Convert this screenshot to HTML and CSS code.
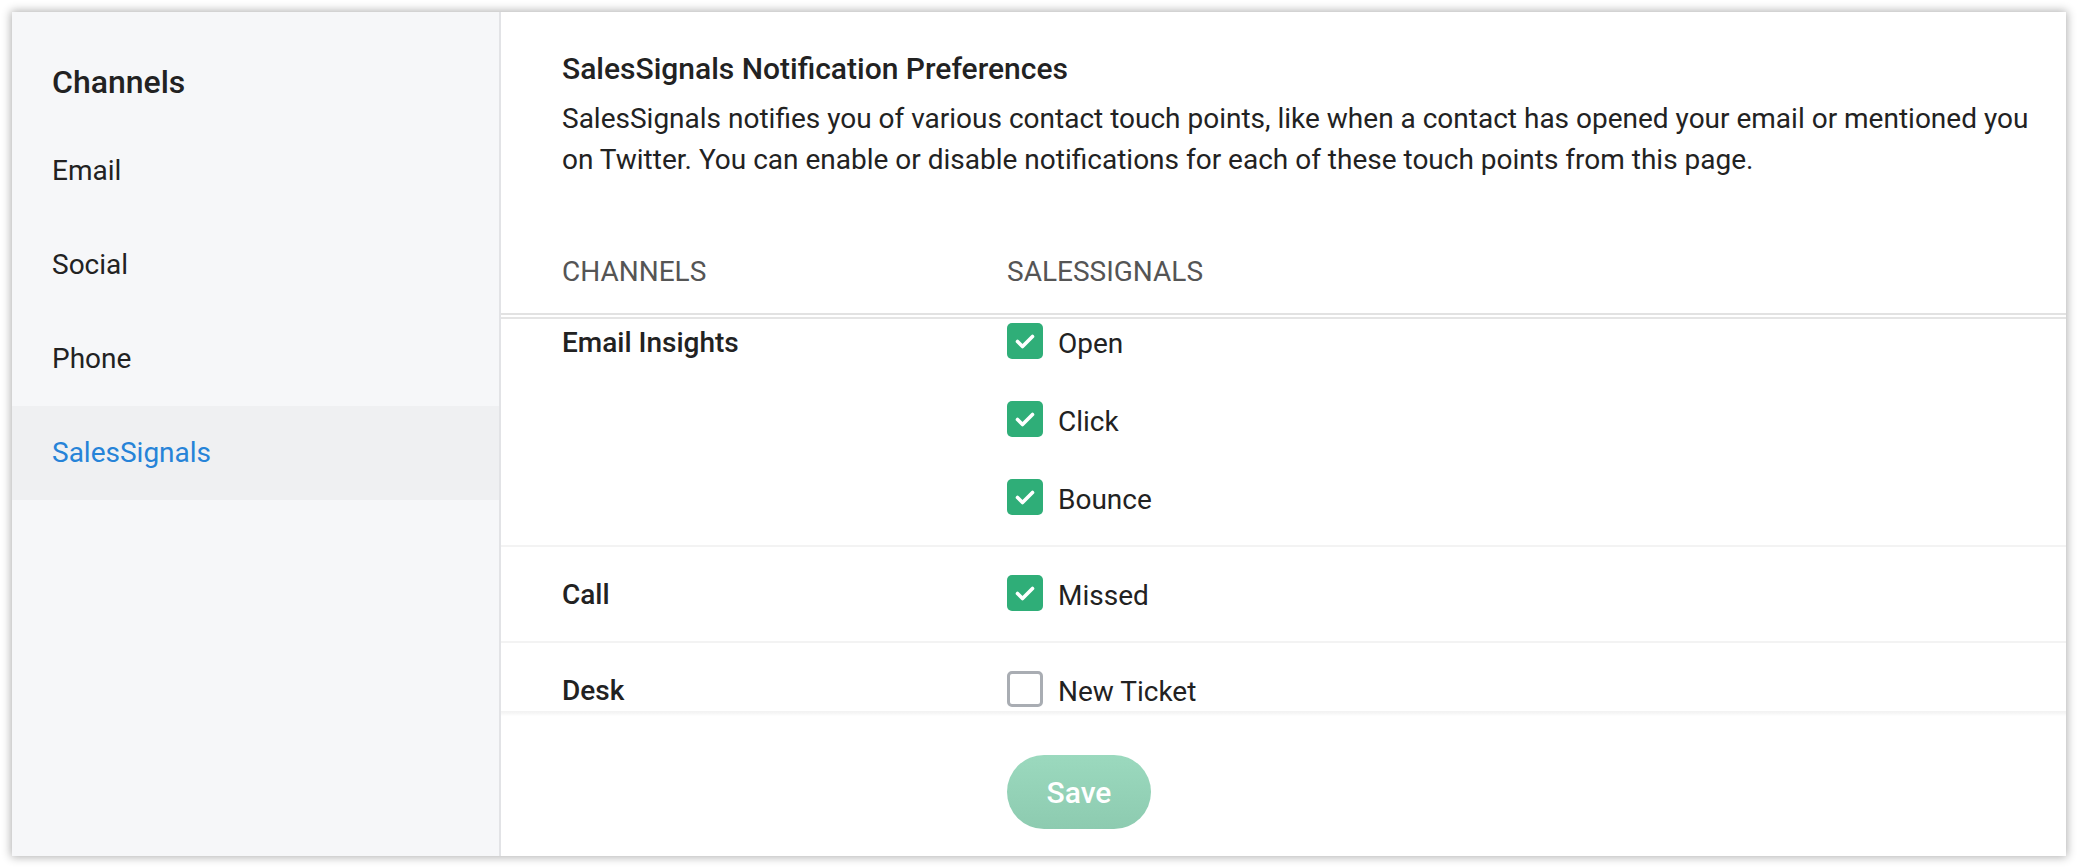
FILE: index.html
```html
<!DOCTYPE html>
<html lang="en">
<head>
<meta charset="utf-8">
<title>SalesSignals Notification Preferences</title>
<link rel="stylesheet" href="styles.css">
</head>
<body>
<div class="card">
  <aside class="sidebar">
    <h2 class="side-title">Channels</h2>
    <nav class="side-nav">
      <div class="side-item">Email</div>
      <div class="side-item">Social</div>
      <div class="side-item">Phone</div>
      <div class="side-item active">SalesSignals</div>
    </nav>
  </aside>
  <main class="panel">
    <header class="intro">
      <h1 class="title">SalesSignals Notification Preferences</h1>
      <p class="desc">SalesSignals notifies you of various contact touch points, like when a contact has opened your email or mentioned you on Twitter. You can enable or disable notifications for each of these touch points from this page.</p>
    </header>
    <div class="grid-row head-row">
      <div class="head-cell">CHANNELS</div>
      <div class="head-cell">SALESSIGNALS</div>
    </div>
    <div class="scroll">
      <div class="rows">
        <div class="grid-row body-row">
          <div class="row-label">Email Insights</div>
          <div class="options">
            <label class="opt"><span class="box checked"><svg viewBox="0 0 36 36"><polyline points="10.5,18.5 15.5,23.5 25.5,13.5"/></svg></span><span class="opt-text">Open</span></label>
            <label class="opt"><span class="box checked"><svg viewBox="0 0 36 36"><polyline points="10.5,18.5 15.5,23.5 25.5,13.5"/></svg></span><span class="opt-text">Click</span></label>
            <label class="opt"><span class="box checked"><svg viewBox="0 0 36 36"><polyline points="10.5,18.5 15.5,23.5 25.5,13.5"/></svg></span><span class="opt-text">Bounce</span></label>
          </div>
        </div>
        <div class="grid-row body-row">
          <div class="row-label">Call</div>
          <div class="options">
            <label class="opt"><span class="box checked"><svg viewBox="0 0 36 36"><polyline points="10.5,18.5 15.5,23.5 25.5,13.5"/></svg></span><span class="opt-text">Missed</span></label>
          </div>
        </div>
        <div class="grid-row body-row">
          <div class="row-label">Desk</div>
          <div class="options">
            <label class="opt"><span class="box"></span><span class="opt-text">New Ticket</span></label>
          </div>
        </div>
      </div>
    </div>
    <footer class="grid-row footer">
      <div></div>
      <div><button class="save" type="button">Save</button></div>
    </footer>
  </main>
</div>
</body>
</html>
```
FILE: styles.css
```css
* { box-sizing: border-box; }
html, body { margin: 0; padding: 0; background: #ffffff; }
body {
  font-family: Roboto, "Noto Sans", "Liberation Sans", sans-serif;
  color: #222222;
  padding: 12px;
  height: 868px;
  overflow: hidden;
}
.card {
  display: flex;
  height: 844px;
  background: #ffffff;
  box-shadow: 0 0 9px 1px rgba(0, 0, 0, 0.32);
  overflow: hidden;
}
.sidebar {
  width: 489px;
  flex: none;
  background: #f6f7f9;
  border-right: 2px solid #e2e3e6;
}
.side-title {
  margin: 0 0 22px 0;
  padding: 50px 0 0 40px;
  font-size: 32px;
  line-height: 40px;
  font-weight: 500;
  color: #222222;
}
.side-item {
  height: 94px;
  line-height: 94px;
  padding-left: 40px;
  font-size: 28px;
  color: #222222;
}
.side-item.active {
  background: #eff0f2;
  color: #2683d8;
}
.panel {
  flex: 1;
  display: flex;
  flex-direction: column;
  min-width: 0;
}
.intro {
  padding: 39px 30px 0 61px;
}
.title {
  margin: 0;
  font-size: 30px;
  line-height: 36px;
  font-weight: 500;
  color: #222222;
}
.desc {
  margin: 11px 0 0 0;
  font-size: 28px;
  line-height: 41px;
  color: #222222;
}
.grid-row {
  display: grid;
  grid-template-columns: 445px 1fr;
  padding-left: 61px;
}
.head-row {
  padding-top: 74px;
  padding-bottom: 23px;
  border-bottom: 2px solid #e2e2e2;
}
.head-cell {
  font-size: 28px;
  line-height: 36px;
  color: #555555;
}
.scroll {
  margin-top: 2px;
  border-top: 2px solid #e4e4e4;
  height: 394px;
  overflow: hidden;
  flex: none;
}
.rows {
  margin-top: -24px;
}
.body-row {
  padding-top: 28px;
  padding-bottom: 30px;
  border-bottom: 2px solid #f3f3f3;
}
.row-label {
  height: 36px;
  font-size: 28px;
  line-height: 40px;
  font-weight: 500;
  color: #222222;
}
.options {
  display: flex;
  flex-direction: column;
  gap: 42px;
}
.opt {
  display: flex;
  align-items: center;
  gap: 15px;
  height: 36px;
  font-size: 28px;
  color: #222222;
}
.opt-text {
  padding-top: 4px;
}
.box {
  width: 36px;
  height: 36px;
  flex: none;
  border-radius: 5px;
  border: 3px solid #a9adb3;
  background: #ffffff;
  display: flex;
}
.box.checked {
  border: none;
  background: #2fae78;
}
.box svg {
  width: 36px;
  height: 36px;
  fill: none;
  stroke: #ffffff;
  stroke-width: 3.6;
  stroke-linecap: round;
  stroke-linejoin: round;
}
.footer {
  flex: 1;
  padding-top: 44px;
  background: linear-gradient(to bottom, #f2f2f2 0, #f5f5f5 2px, #ffffff 5px);
}
.save {
  width: 144px;
  height: 74px;
  border: none;
  border-radius: 37px;
  background: linear-gradient(#9bd9be, #8dcbb0);
  color: #ffffff;
  font-family: Roboto, "Noto Sans", "Liberation Sans", sans-serif;
  font-size: 30px;
  font-weight: 500;
  padding: 0;
}
```
